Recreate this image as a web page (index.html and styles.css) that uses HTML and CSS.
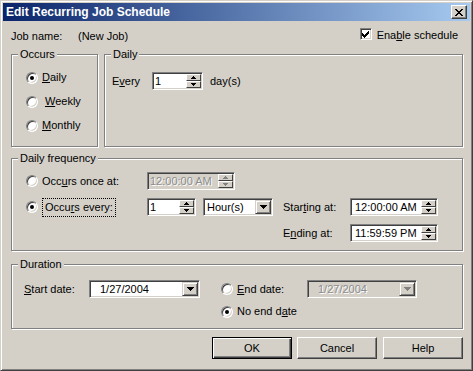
FILE: index.html
```html
<!DOCTYPE html>
<html>
  <head>
    <title>Edit Recurring Job Schedule</title>
    <link rel="stylesheet" href="styles.css">
  </head>

  <body>

    <div class="window">
      <div class="title-bar">
        <span class="title-text">Edit Recurring Job Schedule</span>
        <button class="close-button">
          <svg width="8" height="7" viewBox="0 0 8 7"><path d="M0 0h2v1H0zM6 0h2v1H6zM1 1h2v1H1zM5 1h2v1H5zM2 2h4v1H2zM3 3h2v1H3zM2 4h4v1H2zM1 5h2v1H1zM5 5h2v1H5zM0 6h2v1H0zM6 6h2v1H6z"/></svg>
        </button>
      </div>

      <div class="content">

        <div class="job-row">
          <span class="job-label">Job name:</span>
          <span class="job-value">(New Job)</span>
          <span class="enable">
            <span class="checkbox">
              <svg width="7" height="7" viewBox="0 0 7 7"><path d="M6 0h1v1H6zM5 1h2v1H5zM0 2h1v1H0zM4 2h3v1H4zM0 3h2v1H0zM3 3h3v1H3zM0 4h5v1H0zM1 5h3v1H1zM2 6h1v1H2z"/></svg>
            </span>
            <span class="enable-text">Ena<u>b</u>le schedule</span>
          </span>
        </div>

        <div class="group-row">
          <fieldset class="group occurs">
            <legend>Occurs</legend>
            <div class="occurs-body">
              <div class="option"><span class="radio checked"></span><span><u>D</u>aily</span></div>
              <div class="option"><span class="radio"></span><span class="indent"><u>W</u>eekly</span></div>
              <div class="option"><span class="radio"></span><span><u>M</u>onthly</span></div>
            </div>
          </fieldset>

          <fieldset class="group daily">
            <legend>Daily</legend>
            <div class="daily-body">
              <span class="every-label">E<u>v</u>ery</span>
              <div class="field every-field">
                <span class="field-text">1</span>
                <span class="spin">
                  <span class="spin-btn"><svg width="5" height="3" viewBox="0 0 5 3"><path d="M2 0h1v1h1v1h1v1H0V2h1V1h1z"/></svg></span>
                  <span class="spin-btn"><svg width="5" height="3" viewBox="0 0 5 3"><path d="M0 0h5v1H4v1H3v1H2V2H1V1H0z"/></svg></span>
                </span>
              </div>
              <span class="days">day(s)</span>
            </div>
          </fieldset>
        </div>

        <fieldset class="group freq">
          <legend>Daily frequency</legend>
          <div class="freq-body">
            <div class="option row-1"><span class="radio"></span><span>Occ<u>u</u>rs once at:</span></div>
            <div class="field disabled once-field row-1">
              <span class="field-text">12:00:00 AM</span>
              <span class="spin">
                <span class="spin-btn"><svg width="5" height="3" viewBox="0 0 5 3"><path d="M2 0h1v1h1v1h1v1H0V2h1V1h1z"/></svg></span>
                <span class="spin-btn"><svg width="5" height="3" viewBox="0 0 5 3"><path d="M0 0h5v1H4v1H3v1H2V2H1V1H0z"/></svg></span>
              </span>
            </div>

            <div class="option row-2"><span class="radio checked"></span><span class="focus">Occu<u>r</u>s every:</span></div>
            <div class="field count-field row-2">
              <span class="field-text">1</span>
              <span class="spin">
                <span class="spin-btn"><svg width="5" height="3" viewBox="0 0 5 3"><path d="M2 0h1v1h1v1h1v1H0V2h1V1h1z"/></svg></span>
                <span class="spin-btn"><svg width="5" height="3" viewBox="0 0 5 3"><path d="M0 0h5v1H4v1H3v1H2V2H1V1H0z"/></svg></span>
              </span>
            </div>
            <div class="field combo unit-combo row-2">
              <span class="field-text combo-text">Hour(s)</span>
              <span class="combo-btn"><svg width="7" height="4" viewBox="0 0 7 4"><path d="M0 0h7v1H6v1H5v1H4v1H3V3H2V2H1V1H0z"/></svg></span>
            </div>
            <span class="freq-label row-2">Star<u>t</u>ing at:</span>
            <div class="field time-field row-2">
              <span class="field-text time-text">12:00:00 AM</span>
              <span class="spin">
                <span class="spin-btn"><svg width="5" height="3" viewBox="0 0 5 3"><path d="M2 0h1v1h1v1h1v1H0V2h1V1h1z"/></svg></span>
                <span class="spin-btn"><svg width="5" height="3" viewBox="0 0 5 3"><path d="M0 0h5v1H4v1H3v1H2V2H1V1H0z"/></svg></span>
              </span>
            </div>

            <span class="freq-label ending-label row-3">E<u>n</u>ding at:</span>
            <div class="field time-field ending-field row-3">
              <span class="field-text time-text">11:59:59 PM</span>
              <span class="spin">
                <span class="spin-btn"><svg width="5" height="3" viewBox="0 0 5 3"><path d="M2 0h1v1h1v1h1v1H0V2h1V1h1z"/></svg></span>
                <span class="spin-btn"><svg width="5" height="3" viewBox="0 0 5 3"><path d="M0 0h5v1H4v1H3v1H2V2H1V1H0z"/></svg></span>
              </span>
            </div>
          </div>
        </fieldset>

        <fieldset class="group duration">
          <legend>Duration</legend>
          <div class="duration-body">
            <span><u>S</u>tart date:</span>
            <div class="field combo start-combo">
              <span class="field-text date-text">1/27/2004</span>
              <span class="combo-btn"><svg width="7" height="4" viewBox="0 0 7 4"><path d="M0 0h7v1H6v1H5v1H4v1H3V3H2V2H1V1H0z"/></svg></span>
            </div>
            <div class="option"><span class="radio"></span><span><u>E</u>nd date:</span></div>
            <div class="field combo disabled end-combo">
              <span class="field-text date-text">1/27/2004</span>
              <span class="combo-btn"><svg width="7" height="4" viewBox="0 0 7 4"><path d="M0 0h7v1H6v1H5v1H4v1H3V3H2V2H1V1H0z"/></svg></span>
            </div>
            <div class="option no-end"><span class="radio checked"></span><span>No end d<u>a</u>te</span></div>
          </div>
        </fieldset>

        <div class="buttons">
          <button class="button default">OK</button>
          <button class="button">Cancel</button>
          <button class="button">Help</button>
        </div>

      </div>
    </div>

  </body>
</html>
```

FILE: styles.css
```css
body {
  margin: 0;
  background-color: #d4d0c8;
  font-family: "Liberation Sans", Arial, sans-serif;
  font-size: 11px;
  line-height: 13px;
  color: black;
}

.window {
  width: 473px;
  height: 371px;
  box-sizing: border-box;
  border: 1px solid;
  border-color: #d4d0c8 #404040 #404040 #d4d0c8;
  box-shadow: inset 1px 1px 0 white, inset -1px -1px 0 #808080;
  padding: 2px;
  display: flex;
  flex-direction: column;
}

.title-bar {
  height: 18px;
  flex: none;
  display: flex;
  align-items: center;
  padding: 0 3px;
  background: linear-gradient(to right, #0a246a, #a6caf0);
}

.title-text {
  flex: 1;
  color: white;
  font-weight: bold;
  font-size: 12px;
}

.close-button {
  width: 16px;
  height: 14px;
  padding: 0;
  box-sizing: border-box;
  background-color: #d4d0c8;
  border: 1px solid;
  border-color: white #404040 #404040 white;
  box-shadow: inset -1px -1px 0 #808080;
  display: flex;
  align-items: center;
  justify-content: center;
}

.content {
  display: flex;
  flex-direction: column;
  padding: 7px 7px 0 8px;
}

/* top line */
.job-row {
  display: flex;
  align-items: flex-start;
  height: 15px;
}
.job-label {
  width: 67px;
  padding-top: 2px;
}
.job-value {
  padding-top: 2px;
}
.enable {
  margin-left: auto;
  margin-right: 5px;
  display: flex;
  align-items: flex-start;
}
.enable-text {
  padding-top: 1px;
}

.checkbox {
  width: 12px;
  height: 12px;
  margin-right: 5px;
  box-sizing: border-box;
  border: 1px solid;
  border-color: #808080 white white #808080;
  box-shadow: inset 1px 1px 0 #404040, inset -1px -1px 0 #d4d0c8;
  background-color: white;
  display: flex;
  align-items: center;
  justify-content: center;
}

/* group boxes */
.group {
  margin: 0;
  padding: 0;
  min-width: 0;
  box-sizing: border-box;
  border: 1px solid #808080;
  box-shadow: inset 1px 1px 0 white, 1px 1px 0 white;
}
.group legend {
  margin-left: 6px;
  padding: 0 2px;
  line-height: 13px;
  background-color: #d4d0c8;
}

.group-row {
  display: flex;
  gap: 6px;
  margin-top: 5px;
}
.occurs {
  width: 87px;
  flex: none;
}
.daily {
  flex: 1;
}

.occurs-body {
  display: flex;
  flex-direction: column;
  gap: 11px;
  padding: 10px 0 14px 14px;
}
.indent {
  padding-left: 3px;
}

.daily-body {
  display: flex;
  align-items: center;
  padding: 11px 0 0 7px;
}
.every-label {
  width: 40px;
}
.every-field {
  width: 51px;
}
.days {
  margin-left: 7px;
}

.freq {
  margin-top: 5px;
}
.freq-body {
  display: grid;
  grid-template-columns: 121px 56px 80px 67px 88px;
  grid-template-rows: 18px 18px 18px;
  row-gap: 8px;
  align-items: center;
  padding: 7px 0 8px 14px;
}
.row-1 {
  grid-row: 1;
}
.row-2 {
  grid-row: 2;
}
.row-3 {
  grid-row: 3;
}
.once-field {
  grid-column: 2 / span 2;
  width: 88px;
}
.count-field {
  width: 49px;
}
.unit-combo {
  width: 70px;
}
.ending-label {
  grid-column: 4;
}
.ending-field {
  grid-column: 5;
}
.time-field {
  width: 88px;
}

.duration {
  margin-top: 7px;
}
.duration-body {
  display: grid;
  grid-template-columns: 65px 132px 86px 110px;
  grid-template-rows: 18px 13px;
  row-gap: 7px;
  align-items: center;
  padding: 9px 0 10px 12px;
}
.start-combo {
  width: 111px;
}
.end-combo {
  width: 110px;
}
.no-end {
  grid-column: 3 / span 2;
}

/* radio buttons */
.option {
  display: flex;
  align-items: center;
  gap: 4px;
  white-space: nowrap;
}
.radio {
  width: 12px;
  height: 12px;
  flex: none;
  box-sizing: border-box;
  border-radius: 50%;
  border: 1px solid;
  border-color: #808080 white white #808080;
  box-shadow: inset 1px 1px 0 #404040, inset -1px -1px 0 #d4d0c8;
  background-color: white;
  display: flex;
  align-items: center;
  justify-content: center;
}
.radio.checked::after {
  content: '';
  width: 4px;
  height: 4px;
  border-radius: 50%;
  background-color: black;
}
.focus {
  border: 1px dotted black;
  padding: 2px;
}

/* edit fields, spinners and drop-downs */
.field {
  display: flex;
  height: 18px;
  box-sizing: border-box;
  padding: 1px;
  border: 1px solid;
  border-color: #808080 white white #808080;
  box-shadow: inset 1px 1px 0 #404040, inset -1px -1px 0 #d4d0c8;
  background-color: white;
}
.field-text {
  flex: 1;
  min-width: 0;
  padding-left: 1px;
  line-height: 14px;
  white-space: nowrap;
  overflow: hidden;
}
.time-text {
  padding-left: 3px;
}
.combo-text {
  padding-left: 2px;
}
.date-text {
  padding-left: 9px;
}
.field.disabled {
  background-color: #d4d0c8;
  color: #8c8c8c;
}
.field.disabled .field-text {
  text-shadow: 1px 1px 0 white;
}

.spin {
  width: 15px;
  display: flex;
  flex-direction: column;
}
.spin-btn {
  flex: 1;
  box-sizing: border-box;
  background-color: #d4d0c8;
  border: 1px solid;
  border-color: white #404040 #404040 white;
  display: flex;
  align-items: center;
  justify-content: center;
}

.combo-btn {
  width: 16px;
  box-sizing: border-box;
  background-color: #d4d0c8;
  border: 1px solid;
  border-color: #d4d0c8 #404040 #404040 #d4d0c8;
  box-shadow: inset 1px 1px 0 white, inset -1px -1px 0 #808080;
  display: flex;
  align-items: center;
  justify-content: center;
}

svg {
  display: block;
  fill: currentColor;
}
.field.disabled svg {
  fill: #808080;
}

/* dialog buttons */
.buttons {
  display: flex;
  justify-content: flex-end;
  margin-top: 8px;
}
.button {
  width: 80px;
  height: 22px;
  padding: 0;
  font-family: inherit;
  font-size: 11px;
  color: black;
  background-color: #d4d0c8;
  border: 1px solid;
  border-color: white #404040 #404040 white;
  box-shadow: inset -1px -1px 0 #808080;
}
.button.default {
  margin-right: 5px;
  border-color: black;
  box-shadow: inset 1px 1px 0 white, inset -1px -1px 0 #404040, inset -2px -2px 0 #808080;
}
.buttons .button:nth-child(2) {
  margin-right: 6px;
}
```
